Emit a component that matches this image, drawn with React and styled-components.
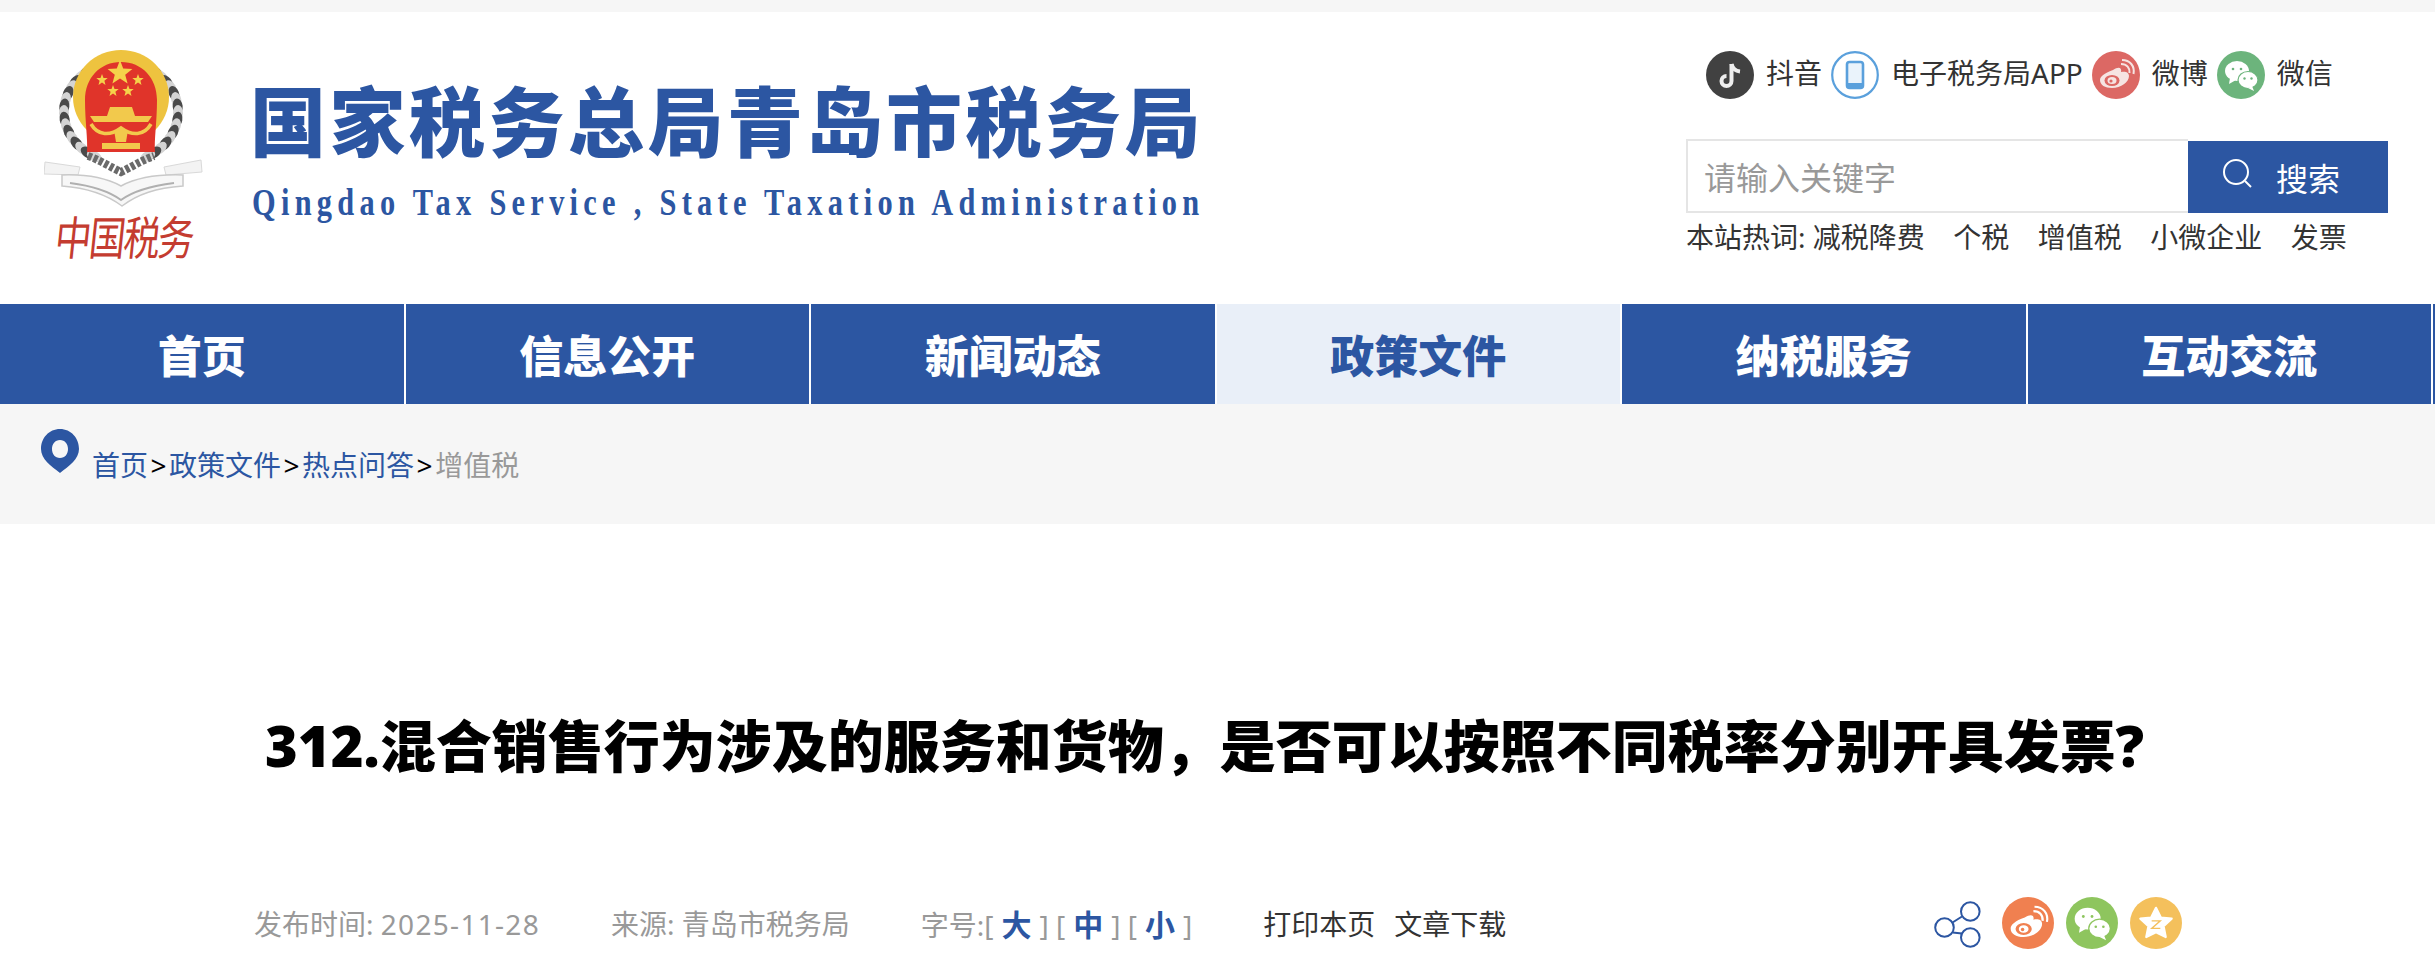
import React from 'react';
import styled, { createGlobalStyle } from 'styled-components';

const BLUE = '#2c56a2';
const FONT = '"Noto Sans", "Noto Sans CJK SC", sans-serif';

const GlobalStyle = createGlobalStyle`
    html, body {
        margin: 0;
        padding: 0;
        background: #ffffff;
        overflow: hidden;
    }
    body {
        font-family: ${FONT};
        color: #333333;
    }
    a {
        color: inherit;
        text-decoration: none;
    }
`;

const Page = styled.div`
    width: 2435px;
    height: 977px;
    border-top: 12px solid #f6f6f6;
    box-sizing: border-box;
    overflow: hidden;
`;

// Шапка

const Header = styled.header`
    height: 292px;
    display: flex;
    justify-content: space-between;
    box-sizing: border-box;
`;

const LogoBlock = styled.div`
    display: flex;
    padding: 38px 0 0 44px;
`;

const EmblemColumn = styled.div`
    width: 160px;
    display: flex;
    flex-direction: column;
    align-items: center;
`;

const EmblemMark = styled.svg`
    display: block;
    width: 160px;
    height: 160px;
`;

const EmblemText = styled.div`
    margin-top: 2px;
    font-size: 37px;
    line-height: 50px;
    letter-spacing: -2px;
    color: #c43c30;
    white-space: nowrap;
    transform: skewX(-6deg) scale(0.98, 1.25);
`;

const LogoText = styled.div`
    margin-left: 46px;
    padding-top: 32px;
`;

const SiteName = styled.div`
    font-size: 76px;
    line-height: 80px;
    font-weight: 900;
    letter-spacing: 3.5px;
    color: ${BLUE};
    white-space: nowrap;
`;

const SiteNameEn = styled.div`
    margin: 19px 0 0 2px;
    font-family: "Liberation Serif", serif;
    font-size: 38px;
    line-height: 42px;
    font-weight: 700;
    color: ${BLUE};
    white-space: nowrap;
    letter-spacing: 6.6px;
    transform: scaleX(0.8);
    transform-origin: left center;
`;

const Tools = styled.div`
    width: 749px;
    padding-top: 39px;
    box-sizing: border-box;
`;

const AppLinks = styled.div`
    display: flex;
    height: 48px;
    padding-left: 20px;
    gap: 9px;
`;

const AppLink = styled.a`
    display: flex;
    align-items: center;
    font-size: 28px;
    line-height: 48px;
    color: #333333;
    gap: 12px;
`;

const AppLabel = styled.span`
    margin-top: -5px;
`;

const AppIcon = styled.svg`
    display: block;
    width: 48px;
    height: 48px;
    flex: none;
`;

const SearchBar = styled.div`
    display: flex;
    width: 702px;
    height: 74px;
    margin-top: 40px;
`;

const SearchInput = styled.div`
    width: 502px;
    border: 2px solid #e5e5e5;
    border-right: none;
    box-sizing: border-box;
    padding-left: 16px;
    font-size: 32px;
    line-height: 73px;
    color: #999999;
`;

const SearchButton = styled.div`
    width: 200px;
    height: 72px;
    margin-top: 2px;
    background: ${BLUE};
    color: #ffffff;
    font-size: 32px;
    display: flex;
    align-items: center;
    padding-left: 33px;
    box-sizing: border-box;
    gap: 23px;
`;

const SearchIcon = styled.svg`
    display: block;
    width: 32px;
    height: 32px;
    margin-top: -6px;
`;

const HotWords = styled.div`
    display: flex;
    gap: 28.5px;
    font-size: 28px;
    line-height: 40px;
    margin-top: 4px;
    color: #333333;
    white-space: nowrap;
`;

// Меню

const Nav = styled.nav`
    display: grid;
    grid-template-columns: repeat(6, 405.5px);
    height: 100px;
    background: ${BLUE};
`;

const NavItem = styled.a`
    display: flex;
    align-items: center;
    justify-content: center;
    font-size: 44px;
    font-weight: 900;
    color: ${props => (props.$active ? BLUE : '#ffffff')};
    background: ${props => (props.$active ? '#e9eff8' : 'transparent')};
    border-right: 2px solid #ffffff;
    box-sizing: border-box;
`;

// Хлебные крошки

const Crumbs = styled.div`
    height: 120px;
    background: #f6f6f6;
    display: flex;
    align-items: flex-start;
    padding: 25px 0 0 41px;
    box-sizing: border-box;
`;

const PinIcon = styled.svg`
    display: block;
    width: 38px;
    height: 44px;
`;

const CrumbPath = styled.div`
    margin: 16px 0 0 13px;
    font-size: 28px;
    line-height: 40px;
    color: #000000;
    white-space: nowrap;
`;

const CrumbLink = styled.a`
    color: ${props => (props.$current ? '#999999' : BLUE)};
`;

const CrumbSep = styled.span`
    margin: 0 2.5px;
`;

// Статья

const Article = styled.main`
    padding: 0 254px;
`;

const Title = styled.h1`
    margin: 181px 0 0;
    padding-right: 26px;
    font-size: 56px;
    line-height: 80px;
    font-weight: 900;
    color: #000000;
    text-align: center;
    white-space: nowrap;
`;

const MetaRow = styled.div`
    display: flex;
    align-items: center;
    height: 52px;
    margin-top: 112px;
    font-size: 28px;
    color: #999999;
    white-space: nowrap;
`;

const MetaItem = styled.span`
    margin-right: 71px;
`;

const MetaDate = styled.span`
    letter-spacing: 1.3px;
`;

const SizeButton = styled.a`
    color: ${BLUE};
    font-size: 30px;
    font-weight: 700;
    margin: 0 8px;
`;

const Action = styled.a`
    color: #333333;
    margin-right: 19px;
`;

const ShareGroup = styled.div`
    display: flex;
    align-items: center;
    gap: 12px;
    margin-left: auto;
    margin-right: -1px;
`;

const ShareIcon = styled.svg`
    display: block;
    width: 47px;
    height: 47px;
    margin: 3px 9px 0 0;
`;

const RoundIcon = styled.svg`
    display: block;
    width: 52px;
    height: 52px;
`;

const navItems = ['首页', '信息公开', '新闻动态', '政策文件', '纳税服务', '互动交流'];
const hotWords = ['减税降费', '个税', '增值税', '小微企业', '发票'];

// Листья венка вдоль дуги вокруг герба

const wreathLeaves = [];
for (let i = 0; i < 16; i++) {
    const deg = -52 + i * 7.6; // от верха к низу
    const rad = deg * Math.PI / 180;
    wreathLeaves.push({
        dx: Math.cos(rad) * 57,
        y: 62 + Math.sin(rad) * 50,
        rotate: deg + 90,
        dark: i % 2 === 0,
    });
}

// Звезда для герба

const starPoints = (cx, cy, r) => {
    const points = [];
    for (let i = 0; i < 10; i++) {
        const radius = i % 2 === 0 ? r : r * 0.42;
        const a = -Math.PI / 2 + i * Math.PI / 5;
        points.push(`${(cx + Math.cos(a) * radius).toFixed(1)},${(cy + Math.sin(a) * radius).toFixed(1)}`);
    }
    return points.join(' ');
};

const Emblem = () => (
    <EmblemMark viewBox="0 0 160 160">
        {wreathLeaves.map((leaf, i) => (
            <g key={i}>
                <ellipse cx={77 - leaf.dx} cy={leaf.y} rx="8" ry="5" transform={`rotate(${-leaf.rotate} ${77 - leaf.dx} ${leaf.y})`} fill={leaf.dark ? '#4a4a4a' : '#d4d4d4'} />
                <ellipse cx={77 + leaf.dx} cy={leaf.y} rx="8" ry="5" transform={`rotate(${leaf.rotate} ${77 + leaf.dx} ${leaf.y})`} fill={leaf.dark ? '#4a4a4a' : '#d4d4d4'} />
            </g>
        ))}
        <ellipse cx="77" cy="47" rx="48" ry="47" fill="#eec33f" />
        <path d="M77 12 C56 12 41 28 41 50 C41 72 44 90 43 102 L111 102 C110 90 113 72 113 50 C113 28 98 12 77 12 Z" fill="#e0342a" />
        <polygon points={starPoints(76, 23, 13)} fill="#f5d24a" />
        <polygon points={starPoints(58, 30, 6)} fill="#f5d24a" />
        <polygon points={starPoints(94, 30, 6)} fill="#f5d24a" />
        <polygon points={starPoints(69, 41, 6)} fill="#f5d24a" />
        <polygon points={starPoints(84, 41, 6)} fill="#f5d24a" />
        <path d="M66 57 L88 57 L91 66 L63 66 Z" fill="#f2c94c" />
        <path d="M46 66 L108 66 L104 72 L50 72 Z" fill="#f2c94c" />
        <path d="M47 74 C54 86 66 86 77 78 C88 86 100 86 107 74" fill="none" stroke="#f2c94c" strokeWidth="3.5" />
        <path d="M58 93 L96 93 L96 99 L58 99 Z" fill="#f2c94c" />
        <path d="M70 80 L84 80 L82 92 L72 92 Z" fill="#f2c94c" />
        <path d="M44 106 C56 110 68 118 77 122 C86 118 98 110 110 106" fill="none" stroke="#6a6a6a" strokeWidth="8" strokeDasharray="4 2" />
        <path d="M1 112 L36 117 L34 125 L0 124 Z" fill="#f3f3f3" stroke="#d9d9d9" />
        <path d="M157 110 L120 117 L122 125 L158 122 Z" fill="#f3f3f3" stroke="#d9d9d9" />
        <path d="M18 125 C44 124 62 128 77 136 C92 128 110 124 139 125 L139 136 C112 138 94 144 78 156 C62 144 44 138 18 136 Z" fill="#f7f7f7" stroke="#c9c9c9" strokeWidth="1.5" />
        <path d="M26 133 C50 136 66 142 77 150 C88 142 106 136 130 133" fill="none" stroke="#b0b0b0" strokeWidth="2" />
    </EmblemMark>
);

const WeiboGlyph = ({ color, hole }) => (
    <g>
        <path d="M21 19 C27 15 30 17 29 21 C33 20 37 21 37 25 C37 31 29 37 20 37 C13 37 8 34 8 29 C8 26 12 22 21 19 Z" fill={color} />
        <ellipse cx="20" cy="29.5" rx="7.5" ry="5.5" fill={hole} />
        <ellipse cx="20" cy="29.5" rx="4.5" ry="3.5" fill={color} />
        <circle cx="19" cy="30" r="1.6" fill={hole} />
        <path d="M29 13 C35 13 38 17 37.5 22" fill="none" stroke={color} strokeWidth="2" />
        <path d="M30 9 C38 9 43 15 41.5 23" fill="none" stroke={color} strokeWidth="2" />
    </g>
);

const WechatGlyph = ({ bg }) => (
    <g>
        <ellipse cx="20" cy="20" rx="12" ry="10" fill="#ffffff" />
        <path d="M13 27 L12 33 L19 29 Z" fill="#ffffff" />
        <ellipse cx="31" cy="29" rx="10" ry="8.5" fill="#ffffff" stroke={bg} strokeWidth="1.2" />
        <path d="M35 35 L37 40 L31 37 Z" fill="#ffffff" />
        <circle cx="16" cy="18" r="1.3" fill={bg} />
        <circle cx="24" cy="18" r="1.3" fill={bg} />
        <circle cx="27.5" cy="27.5" r="1.2" fill={bg} />
        <circle cx="34.5" cy="27.5" r="1.2" fill={bg} />
    </g>
);

const App = () => (
    <Page>
        <GlobalStyle />
        <Header>
            <LogoBlock>
                <EmblemColumn>
                    <Emblem />
                    <EmblemText>中国税务</EmblemText>
                </EmblemColumn>
                <LogoText>
                    <SiteName>国家税务总局青岛市税务局</SiteName>
                    <SiteNameEn>Qingdao Tax Service , State Taxation Administration</SiteNameEn>
                </LogoText>
            </LogoBlock>
            <Tools>
                <AppLinks>
                    <AppLink href="#">
                        <AppIcon viewBox="0 0 48 48">
                            <circle cx="24" cy="24" r="24" fill="#414141" />
                            <path d="M25.5 13 L25.5 30 A5 5 0 1 1 20.5 25" fill="none" stroke="#eeeeee" strokeWidth="4" />
                            <path d="M25.5 13 C26.5 17 29.5 20 34 20.5" fill="none" stroke="#eeeeee" strokeWidth="4" />
                        </AppIcon>
                        <AppLabel>抖音</AppLabel>
                    </AppLink>
                    <AppLink href="#">
                        <AppIcon viewBox="0 0 48 48">
                            <circle cx="24" cy="24" r="22.8" fill="#ffffff" stroke="#5aa0dc" strokeWidth="2.2" />
                            <rect x="16" y="11" width="16" height="26" rx="2.5" fill="#eaf3fb" stroke="#5aa0dc" strokeWidth="2.6" />
                            <rect x="16" y="32" width="16" height="5" fill="#5aa0dc" />
                        </AppIcon>
                        <AppLabel>电子税务局APP</AppLabel>
                    </AppLink>
                    <AppLink href="#">
                        <AppIcon viewBox="0 0 48 48">
                            <circle cx="24" cy="24" r="24" fill="#dc6864" />
                            <WeiboGlyph color="#f6e4e2" hole="#dc6864" />
                        </AppIcon>
                        <AppLabel>微博</AppLabel>
                    </AppLink>
                    <AppLink href="#">
                        <AppIcon viewBox="0 0 48 48">
                            <circle cx="24" cy="24" r="24" fill="#6cb47c" />
                            <WechatGlyph bg="#6cb47c" />
                        </AppIcon>
                        <AppLabel>微信</AppLabel>
                    </AppLink>
                </AppLinks>
                <SearchBar>
                    <SearchInput>请输入关键字</SearchInput>
                    <SearchButton>
                        <SearchIcon viewBox="0 0 32 32">
                            <circle cx="15" cy="14" r="12" fill="none" stroke="#ffffff" strokeWidth="2" />
                            <path d="M24 23 L30 29" stroke="#ffffff" strokeWidth="2" />
                        </SearchIcon>
                        搜索
                    </SearchButton>
                </SearchBar>
                <HotWords>
                    <span>本站热词: {hotWords[0]}</span>
                    {hotWords.slice(1).map(word => (
                        <a href="#" key={word}>{word}</a>
                    ))}
                </HotWords>
            </Tools>
        </Header>
        <Nav>
            {navItems.map(item => (
                <NavItem href="#" key={item} $active={item === '政策文件'}>{item}</NavItem>
            ))}
        </Nav>
        <Crumbs>
            <PinIcon viewBox="0 0 38 44">
                <path fillRule="evenodd" d="M19 0 C30 0 38 9 38 20 C38 30 28 37 19 44 C10 37 0 30 0 20 C0 9 8 0 19 0 Z M19 11 C14 11 11 15 11 20 C11 25 14 29 19 29 C24 29 27 25 27 20 C27 15 24 11 19 11 Z" fill={BLUE} />
            </PinIcon>
            <CrumbPath>
                <CrumbLink href="#">首页</CrumbLink>
                <CrumbSep>&gt;</CrumbSep>
                <CrumbLink href="#">政策文件</CrumbLink>
                <CrumbSep>&gt;</CrumbSep>
                <CrumbLink href="#">热点问答</CrumbLink>
                <CrumbSep>&gt;</CrumbSep>
                <CrumbLink href="#" $current>增值税</CrumbLink>
            </CrumbPath>
        </Crumbs>
        <Article>
            <Title>312.混合销售行为涉及的服务和货物，是否可以按照不同税率分别开具发票?</Title>
            <MetaRow>
                <MetaItem>发布时间: <MetaDate>2025-11-28</MetaDate></MetaItem>
                <MetaItem>来源: 青岛市税务局</MetaItem>
                <MetaItem>
                    字号:[<SizeButton href="#">大</SizeButton>] [<SizeButton href="#">中</SizeButton>] [<SizeButton href="#">小</SizeButton>]
                </MetaItem>
                <Action href="#">打印本页</Action>
                <Action href="#">文章下载</Action>
                <ShareGroup>
                    <ShareIcon viewBox="0 0 47 47">
                        <g fill="none" stroke={BLUE} strokeWidth="2">
                            <circle cx="10.5" cy="26.5" r="9.3" />
                            <circle cx="36.3" cy="10.5" r="9.3" />
                            <circle cx="36.3" cy="36.5" r="9.3" />
                            <path d="M18.5 21.5 L28 15.5 M18.5 31.5 L28 32.5" />
                        </g>
                    </ShareIcon>
                    <RoundIcon viewBox="0 0 48 48">
                        <circle cx="24" cy="24" r="24" fill="#f08050" />
                        <WeiboGlyph color="#ffffff" hole="#f08050" />
                    </RoundIcon>
                    <RoundIcon viewBox="0 0 48 48">
                        <circle cx="24" cy="24" r="24" fill="#8ec55e" />
                        <WechatGlyph bg="#8ec55e" />
                    </RoundIcon>
                    <RoundIcon viewBox="0 0 48 48">
                        <circle cx="24" cy="24" r="24" fill="#f4c05c" />
                        <polygon points="24,10 28.5,19 38.5,20 31,27 33,37 24,32.5 15,37 17,27 9.5,20 19.5,19" fill="#ffffff" stroke="#ffffff" strokeWidth="2" strokeLinejoin="round" />
                        <path d="M20 22 L28 22 L20 29 L28 29" fill="none" stroke="#f4c05c" strokeWidth="1.2" />
                    </RoundIcon>
                </ShareGroup>
            </MetaRow>
        </Article>
    </Page>
);

export default App;
